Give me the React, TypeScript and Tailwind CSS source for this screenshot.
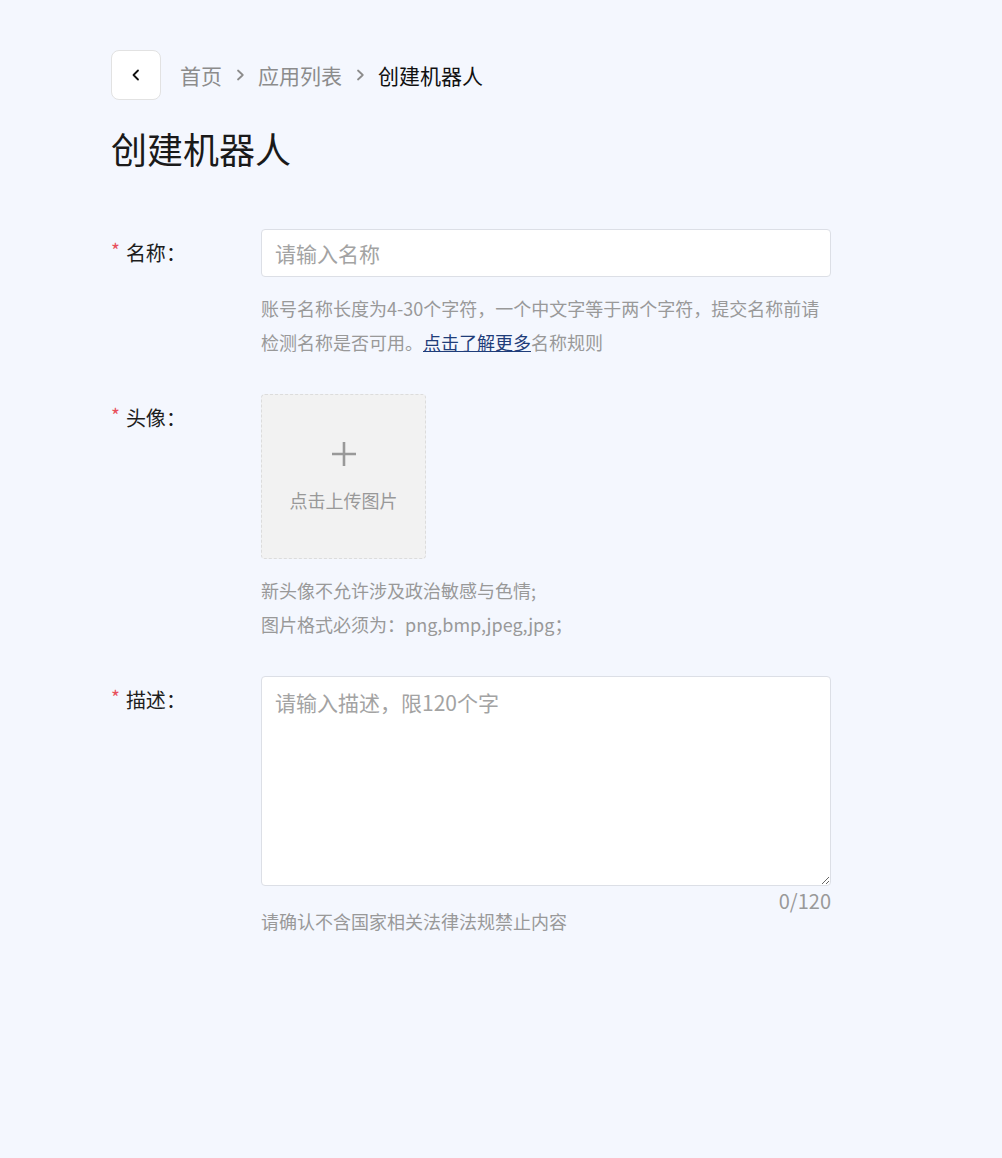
import { useState } from "react";

const Chevron = ({ className }: { className?: string }) => (
  <svg viewBox="0 0 12 12" className={className} fill="none">
    <path d="M4 1.5 L8.8 6 L4 10.5" stroke="currentColor" strokeWidth="1.8" strokeLinecap="round" strokeLinejoin="round" />
  </svg>
);

const Label = ({ text }: { text: string }) => (
  <div className="w-[150px] shrink-0 h-12 flex items-center text-[20px] text-[#1d1d1d]">
    <span className="text-[#e8505b] text-[19px] mr-[6px] -mt-[5px]">*</span>
    {text}：
  </div>
);

export default function App() {
  const [desc, setDesc] = useState("");

  return (
    <div className="min-h-screen bg-[#f4f7fe] font-['Noto_Sans_CJK_SC','Noto_Sans',sans-serif]">
      <div className="pl-[111px] pt-[50px] pb-[200px]">
        {/* header / breadcrumb */}
        <div className="flex items-center">
          <button className="w-[50px] h-[50px] rounded-lg border border-[#e2e2e2] bg-white flex items-center justify-center text-[#111]">
            <svg viewBox="0 0 16 16" className="w-4 h-4" fill="none">
              <path d="M10 3.5 L5.5 8 L10 12.5" stroke="currentColor" strokeWidth="1.8" strokeLinecap="round" strokeLinejoin="round" />
            </svg>
          </button>
          <nav className="ml-[19px] flex items-center gap-3 text-[21px] leading-[30px]">
            <span className="text-[#8c8c8c]">首页</span>
            <Chevron className="w-3 h-3 text-[#8c8c8c]" />
            <span className="text-[#8c8c8c]">应用列表</span>
            <Chevron className="w-3 h-3 text-[#8c8c8c]" />
            <span className="text-[#111]">创建机器人</span>
          </nav>
        </div>

        <h1 className="mt-[24px] text-[36px] leading-[48px] text-[#1a1a1a]">创建机器人</h1>

        <div className="mt-[57px]">
          {/* name */}
          <div className="flex">
            <Label text="名称" />
            <div className="w-[570px]">
              <input
                className="w-full h-12 rounded-[4px] border border-[#dcdfe6] bg-white px-[13px] text-[21px] text-[#333] outline-none placeholder:text-[#a3a3a3]"
                placeholder="请输入名称"
              />
              <p className="mt-[14px] text-[18px] leading-[34px] text-[#999]">
                账号名称长度为4-30个字符，一个中文字等于两个字符，提交名称前请检测名称是否可用。
                <a href="#" className="text-[#1f3d7a] underline">点击了解更多</a>
                名称规则
              </p>
            </div>
          </div>

          {/* avatar */}
          <div className="flex mt-[35px]">
            <Label text="头像" />
            <div className="w-[570px]">
              <div className="w-[165px] h-[165px] rounded-[4px] border border-dashed border-[#dcdcdc] bg-[#f2f2f2] flex flex-col items-center justify-center gap-[22px] cursor-pointer">
                <svg viewBox="0 0 24 24" className="w-6 h-6 text-[#999]" fill="none">
                  <path d="M12 0 V24 M0 12 H24" stroke="currentColor" strokeWidth="2.6" />
                </svg>
                <span className="text-[18px] leading-[24px] text-[#999]">点击上传图片</span>
              </div>
              <div className="mt-[14px] text-[18px] leading-[34px] text-[#999]">
                <p>新头像不允许涉及政治敏感与色情;</p>
                <p>图片格式必须为：png,bmp,jpeg,jpg；</p>
              </div>
            </div>
          </div>

          {/* description */}
          <div className="flex mt-[35px]">
            <Label text="描述" />
            <div className="w-[570px]">
              <textarea
                value={desc}
                maxLength={120}
                onChange={(e) => setDesc(e.target.value)}
                className="block w-full h-[210px] rounded-[4px] border border-[#dcdfe6] bg-white px-[13px] pt-[10px] text-[21px] leading-[30px] text-[#333] outline-none placeholder:text-[#a3a3a3]"
                placeholder="请输入描述，限120个字"
              />
              <div className="mt-[5px] text-right text-[20px] leading-[20px] text-[#999]">{desc.length}/120</div>
              <p className="text-[18px] leading-[20px] text-[#999]">请确认不含国家相关法律法规禁止内容</p>
            </div>
          </div>
        </div>
      </div>
    </div>
  );
}
